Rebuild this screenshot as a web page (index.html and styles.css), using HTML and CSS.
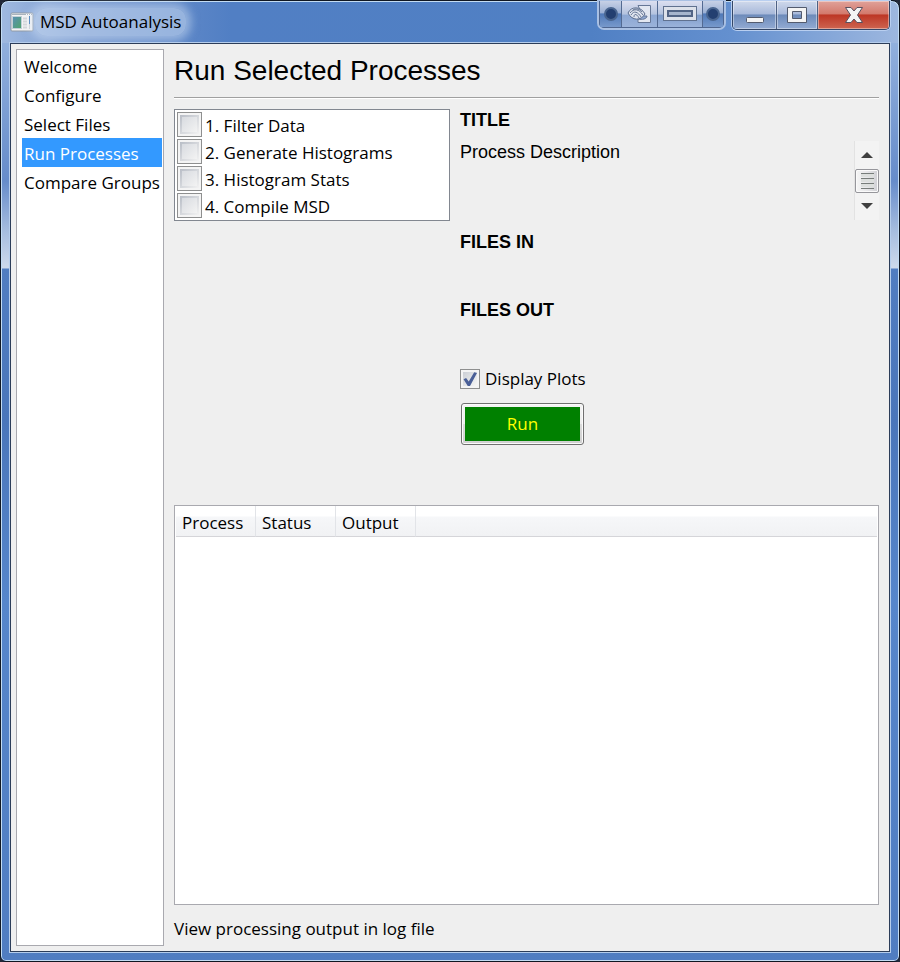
FILE: index.html
```html
<!DOCTYPE html>
<html lang="en">
<head>
<meta charset="utf-8">
<title>MSD Autoanalysis</title>
<link rel="stylesheet" href="styles.css">
</head>
<body>
<div class="window">
  <header class="titlebar">
    <svg class="app-icon" width="24" height="20" viewBox="0 0 24 20" aria-hidden="true">
      <defs><linearGradient id="pic" x1="0" y1="0" x2="1" y2="1"><stop offset="0" stop-color="#5b8fb5"/><stop offset="1" stop-color="#4fa56c"/></linearGradient></defs>
      <rect x="1" y="1" width="22" height="18" rx="1" fill="#f4f4f4" stroke="#8f99a5"/>
      <path d="M2 2.5H22" stroke="#a9b3bd"/>
      <path d="M16 2.5H17M18 2.5H19M20 2.5H21" stroke="#fff"/>
      <rect x="2.5" y="4.500" width="9" height="12" fill="url(#pic)" stroke="#c2d0d8"/>
      <path d="M13 6.500H17M13 9.500H17M13 12.500H17M13 15.500H17" stroke="#d3d6d9" stroke-width="2"/>
      <path d="M19.500 4V12" stroke="#3e78b8"/><path d="M19.500 12V17" stroke="#cfd2d5"/>
    </svg>
    <h1 class="window-title">MSD Autoanalysis</h1>
    <div class="monitor-buttons">
      <button class="mon" aria-label="Previous monitor"><svg width="20" height="24" viewBox="0 0 20 24"><circle cx="10" cy="12" r="6" fill="#233f70" stroke="#49658f" stroke-width="2"/></svg></button>
      <button class="mon wide" aria-label="Desktop manager"><svg width="28" height="24" viewBox="0 0 28 24"><path d="M12 3.500H24.500V20.500H12V17C16 18 21 17 21 14H17Z" fill="#e2e7f1" stroke="#667796"/><path d="M2 11C5 4 15 4 19 12C15 19 6 19 2 11Z" fill="#dfe4ee" stroke="#596b8c"/><path d="M4 11C8 6 13 7 17 13M5 13C8 8 12 10 15 15M8 15C8 11 11 12 13 16M7 8C10 6 14 7 16 10" fill="none" stroke="#667796"/></svg></button>
      <button class="mon widest" aria-label="Span monitors"><svg width="36" height="20" viewBox="0 0 36 20"><rect x="1.500" y="2.500" width="33" height="14" fill="#dde1ea" stroke="#60718f"/><rect x="6" y="7" width="24" height="5" fill="#a7b5cd" stroke="#526485" stroke-width="2"/></svg></button>
      <button class="mon" aria-label="Next monitor"><svg width="20" height="24" viewBox="0 0 20 24"><circle cx="10" cy="12" r="6" fill="#233f70" stroke="#49658f" stroke-width="2"/></svg></button>
    </div>
    <div class="window-buttons">
      <button class="win minimize" aria-label="Minimize"><svg width="20" height="24" viewBox="0 0 20 24"><rect x="1.500" y="14.500" width="17" height="5" rx="1" fill="#f4f4f4" stroke="#535b6e"/></svg></button>
      <button class="win maximize" aria-label="Maximize"><svg width="20" height="24" viewBox="0 0 20 24"><path d="M.5 4.500H19.500V19.500H.5ZM5.500 8.500V15.500H14.500V8.500Z" fill="#f4f4f4" stroke="#535b6e" fill-rule="evenodd"/></svg></button>
      <button class="win close" aria-label="Close"><svg width="20" height="24" viewBox="0 0 20 24"><path d="M1.500 4.500H7L10 8L13 4.500H18.500L13.500 12L18.500 19.500H13L10 16L7 19.500H1.500L6.500 12Z" fill="#f4f4f4" stroke="#59505e"/></svg></button>
    </div>
  </header>

  <div class="client">
    <nav class="sidebar">
      <a href="#welcome">Welcome</a>
      <a href="#configure">Configure</a>
      <a href="#files">Select Files</a>
      <a href="#run" class="selected" aria-current="page">Run Processes</a>
      <a href="#compare">Compare Groups</a>
    </nav>
    <main class="page">
      <h2 class="page-title">Run Selected Processes</h2>
      <div class="columns">
        <div class="checklist">
          <label><input type="checkbox"><span>1. Filter Data</span></label>
          <label><input type="checkbox"><span>2. Generate Histograms</span></label>
          <label><input type="checkbox"><span>3. Histogram Stats</span></label>
          <label><input type="checkbox"><span>4. Compile MSD</span></label>
        </div>
        <div class="details">
          <h3>TITLE</h3>
          <div class="description">
            <p>Process Description</p>
            <div class="scrollbar">
              <button class="arrow" aria-label="Scroll up"><svg width="12" height="6" viewBox="0 0 12 6"><path d="M0 6L6 0L12 6Z" fill="#404040"/></svg></button>
              <div class="thumb"><svg width="13" height="16" viewBox="0 0 13 16"><path d="M0 2.500H13M0 7.500H13M0 12.500H13" stroke="#dcdfdd" stroke-width="3"/><path d="M0 .5H13M0 5.500H13M0 10.500H13M0 15.500H13" stroke="#777d7a"/></svg></div>
              <button class="arrow" aria-label="Scroll down"><svg width="12" height="6" viewBox="0 0 12 6"><path d="M0 0L6 6L12 0Z" fill="#404040"/></svg></button>
            </div>
          </div>
          <h3 class="files">FILES IN</h3>
          <h3 class="files">FILES OUT</h3>
          <label class="plots"><input type="checkbox" checked><span>Display Plots</span></label>
          <button class="run"><span>Run</span></button>
        </div>
      </div>
      <div class="results">
        <table>
          <thead><tr><th>Process</th><th>Status</th><th>Output</th><td></td></tr></thead>
        </table>
      </div>
      <p class="footer">View processing output in log file</p>
    </main>
  </div>
</div>
</body>
</html>
```
FILE: styles.css
```css
* { box-sizing: border-box; }
body {
  margin: 0;
  background: #222838;
  color: #000;
  font: 17px/24px "Open Sans", "Noto Sans", sans-serif;
}
h1, h2, h3, p { margin: 0; }
button { margin: 0; padding: 0; border: 0; background: none; font: inherit; }
svg { display: block; }

.window {
  display: flex;
  flex-direction: column;
  min-height: 100vh;
  padding: 0 9px 9px;
  border: 1px solid #101722;
  border-radius: 8px 8px 6px 6px;
  box-shadow: inset 0 0 0 1px #c3dcf3;
  background:
    linear-gradient(90deg, #9fb9e0 0, #7395cd 90px, #517fc4 230px, #5080c4 590px, #6490cf 730px, #9db7df 100%) 0 0 / 100% 42px no-repeat,
    linear-gradient(#91b0dd 42px, #668cca 180px, #a6bddf 230px, #cdd9eb 267px, #507dc1 268px, #4a76ba 420px, #5686cb 600px, #507dc1 100%);
}

.titlebar { display: flex; height: 42px; }
.app-icon { margin-top: 11px; }
.window-title {
  height: 28px;
  margin: 7px 0 0 1px;
  padding: 0 5px;
  font-size: 17px;
  line-height: 28px;
  font-weight: 400;
  border-radius: 12px;
  background: rgba(210, 225, 245, .5);
  box-shadow: 0 0 8px 5px rgba(210, 225, 245, .5);
}
.monitor-buttons {
  display: flex;
  height: 27px;
  margin-left: auto;
  border: 1px solid #4f6690;
  border-top: 0;
  border-radius: 0 0 5px 5px;
  box-shadow: 0 0 0 2px #a9c0e3;
}
.mon {
  display: grid;
  place-items: center;
  width: 21px;
  background: linear-gradient(#c7d1e6 0, #9bb0d4 45%, #5079b8 50%, #7799cb 100%);
}
.mon + .mon { border-left: 1px solid #536a92; }
.monitor-buttons .wide {
  width: 36px;
  background: linear-gradient(#dcdff0 0, #b4c3df 50%, #8ca7d3 55%, #9bb3da 100%);
}
.monitor-buttons .widest {
  width: 45px;
  background: linear-gradient(#dcdff0 0, #b4c3df 50%, #7f9dcc 55%, #9bb3da 100%);
}
.window-buttons {
  display: flex;
  height: 29px;
  margin-left: 8px;
  border: 1px solid #344767;
  border-top: 0;
  border-radius: 0 0 5px 5px;
  box-shadow: 0 0 0 1px #b9cff0;
  overflow: hidden;
}
.win {
  display: grid;
  place-items: center;
  width: 43px;
  background: linear-gradient(#d0d9eb 0, #a8b9da 46%, #6d8bba 50%, #93abd3 100%);
  box-shadow: inset 0 0 0 1px rgba(255, 255, 255, .4);
}
.win + .win { border-left: 1px solid #4e6184; }
.window-buttons .maximize { width: 41px; }
.window-buttons .close {
  width: 72px;
  background: linear-gradient(#e0a29a 0, #d3796c 46%, #bd3625 50%, #cd6550 100%);
}

.client {
  display: flex;
  flex: 1;
  padding: 5px;
  gap: 10px;
  border: 1px solid #2c3d59;
  outline: 1px solid #b5cdec;
  background: #efefef;
}
.sidebar {
  flex: 0 0 148px;
  padding: 1px 1px 0 5px;
  border: 1px solid #a9a9af;
  background: #fff;
}
.sidebar a {
  display: block;
  height: 29px;
  padding-left: 2px;
  line-height: 32px;
  color: #000;
  text-decoration: none;
  white-space: nowrap;
}
.sidebar .selected { background: #3399ff; color: #fff; }

.page {
  display: flex;
  flex: 1;
  flex-direction: column;
  min-width: 0;
  padding-right: 5px;
}
.page-title {
  height: 49px;
  border-bottom: 1px solid #a0a0a0;
  box-shadow: 0 1px #fff;
  font: 28px/44px "Liberation Sans", sans-serif;
}
.columns {
  display: flex;
  align-items: flex-start;
  gap: 10px;
  margin-top: 11px;
}
.checklist {
  flex: 0 0 276px;
  padding: 2px;
  border: 1px solid #828790;
  background: #fff;
}
.checklist label { display: flex; gap: 2px; height: 27px; line-height: 28px; }
.checklist label:last-child { height: 25px; }
input[type="checkbox"] {
  appearance: none;
  flex: none;
  display: grid;
  place-items: center;
  width: 20px;
  height: 20px;
  margin: 0;
  border: 1px solid #8e8f8f;
  background: linear-gradient(135deg, #cbcfd5, #f6f6f6) content-box, #f4f4f4;
  padding: 2px;
}
.checklist input {
  width: 25px;
  height: 25px;
  background: linear-gradient(135deg, #b8bdc6, #f2f2f2) content-box, #f4f4f4;
}
.checklist label { padding-left: 0; gap: 3px; }
.checklist input::after {
  content: "";
  width: 15px;
  height: 15px;
  background: linear-gradient(135deg, #d8dbe0, #f3f3f3);
}
.plots input:checked::after {
  content: "";
  width: 14px;
  height: 14px;
  background: #4a5f97;
  clip-path: polygon(4% 52%, 22% 43%, 41% 68%, 80% 2%, 100% 8%, 50% 100%, 34% 100%);
}

.details { flex: 1; min-width: 0; }
.details h3 { height: 32px; font: bold 18px/22px "Liberation Sans", sans-serif; }
.description { display: flex; justify-content: space-between; height: 79px; }
.description p { font: 18px/22px "Liberation Sans", sans-serif; }
.scrollbar {
  display: flex;
  flex-direction: column;
  width: 25px;
  border-left: 1px solid #e2e2e2;
  background: #f3f3f3;
}
.arrow { display: grid; flex: 1; place-items: center; }
.thumb {
  display: grid;
  place-items: center;
  height: 24px;
  border: 1px solid #96969b;
  border-radius: 2px;
  background: linear-gradient(90deg, #f5f5f5, #e7e7e9 50%, #cfcfd4);
  box-shadow: inset 0 0 0 1px #fafafa;
}
.details .files { height: 68px; padding-top: 11px; }
.plots { display: flex; align-items: center; gap: 5px; height: 24px; margin-top: 11px; }
.run {
  display: grid;
  width: 123px;
  height: 42px;
  margin: 12px 0 0 1px;
  padding: 3px;
  border: 1px solid #707070;
  border-radius: 3px;
  background: linear-gradient(#f4f4f4 0, #ededed 50%, #dcdcdc 51%, #cfcfcf 100%);
  box-shadow: inset 0 0 0 1px #fbfbfb;
  color: #ff0;
}
.run span { display: grid; place-items: center; background: #008000; }

.results {
  flex: 1;
  margin-top: 60px;
  padding: 0 1px;
  border: 1px solid #a9a9af;
  background: #fff;
}
.results table { width: 100%; border-collapse: separate; border-spacing: 0; table-layout: fixed; }
.results th, .results td {
  height: 31px;
  padding: 4px 0 0 6px;
  border-bottom: 1px solid #d5d5d9;
  background: linear-gradient(#fff 10px, #f6f7f9 11px, #f1f2f4);
}
.results th {
  width: 80px;
  border-right: 1px solid #e2e4e8;
  font-weight: 400;
  text-align: left;
}
.footer { height: 41px; padding-top: 12px; }
```
